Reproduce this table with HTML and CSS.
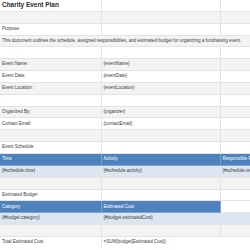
FILE: index.html
```html
<!DOCTYPE html>
<html>
<head>
<meta charset="utf-8">
<link rel="stylesheet" href="styles.css">
</head>
<body>
<table class="sheet">
  <colgroup><col class="ca"><col class="cb"><col class="cc"></colgroup>
  <tr><td class="title">Charity Event Plan</td><td></td><td></td></tr>
  <tr class="alt"><td></td><td></td><td></td></tr>
  <tr><td>Purpose:</td><td></td><td></td></tr>
  <tr class="alt"><td colspan="3" class="desc">This document outlines the schedule, assigned responsibilities, and estimated budget for organizing a fundraising event.</td></tr>
  <tr><td></td><td></td><td></td></tr>
  <tr class="alt"><td>Event Name:</td><td>{eventName}</td><td></td></tr>
  <tr><td>Event Date:</td><td>{eventDate}</td><td></td></tr>
  <tr class="alt"><td>Event Location:</td><td>{eventLocation}</td><td></td></tr>
  <tr><td></td><td></td><td></td></tr>
  <tr class="alt"><td>Organized By:</td><td>{organizer}</td><td></td></tr>
  <tr><td>Contact Email:</td><td>{contactEmail}</td><td></td></tr>
  <tr class="alt"><td></td><td></td><td></td></tr>
  <tr><td>Event Schedule</td><td></td><td></td></tr>
  <tr class="head"><td>Time</td><td>Activity</td><td>Responsible Person</td></tr>
  <tr class="data"><td>{#schedule.time}</td><td>{#schedule.activity}</td><td>{#schedule.responsible}</td></tr>
  <tr class="alt"><td></td><td></td><td></td></tr>
  <tr><td>Estimated Budget</td><td></td><td></td></tr>
  <tr class="head"><td>Category</td><td>Estimated Cost</td><td class="plain"></td></tr>
  <tr class="data"><td>{#budget.category}</td><td colspan="2">{#budget.estimatedCost}</td></tr>
  <tr class="alt"><td></td><td></td><td></td></tr>
  <tr class="last"><td>Total Estimated Cost</td><td colspan="2">=SUM(budget[Estimated Cost])</td></tr>
</table>
</body>
</html>
```

FILE: styles.css
```css
html, body {
  margin: 0;
  padding: 0;
  background: #ffffff;
  overflow: hidden;
}
.sheet {
  border-collapse: collapse;
  table-layout: fixed;
  width: 250px;
  font-family: "Liberation Sans", Arial, sans-serif;
  font-size: 4.5px;
  color: #3a3a3a;
}
.ca { width: 101px; }
.cb { width: 119px; }
.cc { width: 30px; }
.sheet td {
  height: 10.85px;
  padding: 0 0 0 2px;
  border: 1px solid #e3e3e3;
  white-space: nowrap;
  overflow: hidden;
  text-overflow: clip;
  vertical-align: middle;
  line-height: 1;
}
.sheet tr:first-child td { border-top: none; }
.sheet td:first-child { border-left: none; }
.sheet td:last-child { border-right: none; }
.title {
  font-weight: bold;
  font-size: 6.45px;
  color: #2a2a2a;
}
.alt td { background: #f3f3f3; }
.head td {
  background: #4f81bd;
  color: #ffffff;
  border-color: #7fa3cf;
}
.head td.plain {
  background: #ffffff;
  border-color: #e3e3e3;
}
.data td { background: #dce6f1; border-color: #e3e3e3; }
.last td { border-bottom: none; }
```
